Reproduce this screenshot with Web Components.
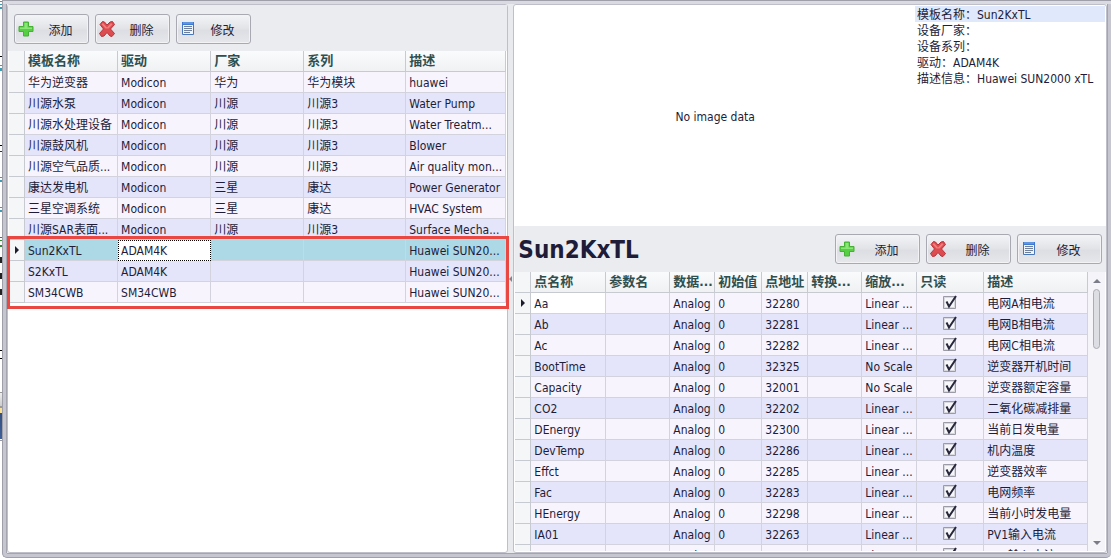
<!DOCTYPE html>
<html lang="zh-CN">
<head>
<meta charset="utf-8">
<title>设备模板</title>
<style>
  html, body { margin: 0; height: 100%; }
  body {
    font: 12px/20px "DejaVu Sans Condensed", "Noto Sans", "Noto Sans CJK SC", sans-serif;
    color: #1e1c38; background: #fff; overflow: hidden;
  }
</style>
</head>
<body>
<template-manager></template-manager>

<template id="t-manager">
  <style>
    :host { display: flex; height: 100vh; }
    .backdrop {
      flex: 0 0 2px;
      background: linear-gradient(#fff 0 1px, #3b9db5 1px 2px, #fff 2px 4px, #3b9db5 4px 5px, #fff 5px 7px, #3b9db5 7px 9px,
        #fff 9px 56px, #000 56px 57px, #fff 57px 65px, #3b9db5 65px 66px, #fff 66px 68px, #3b9db5 68px 71px,
        #fff 71px 145px, #000 145px 146px, #fff 146px 151px, #333 151px 152px, #fff 152px 177px, #3b9db5 177px 178px,
        #fff 178px 180px, #3b9db5 180px 182px, #fff 182px 207px, #3b9db5 207px 208px, #fff 208px 210px, #3b9db5 210px 212px,
        #fff 212px 237px, #2a8c2a 237px 238px, #fff 238px 240px, #2a8c2a 240px 241px, #fff 241px 245px, #2a8c2a 245px 247px,
        #fff 247px 257px, #222 257px 263px, #fff 263px 273px, #222 273px 279px, #fff 279px 289px, #222 289px 295px,
        #fff 295px 350px, #000 350px 351px, #fff 351px 358px, #000 358px 359px, #fff 359px 392px, #999 392px 393px,
        #eee 393px, #ccc 406px, #999 406px 408px, #f8e09a 408px 413px, #34507f 413px, #3f5f9a 439px, #fff 439px 440px, #999 440px 441px, #fff 441px);
    }
    .frame {
      flex: 1; min-width: 0; display: flex; box-sizing: border-box;
      border: solid #9f9faa; border-width: 1px 0 1px 1px; border-radius: 0 0 5px 5px;
      padding: 3px 4px 4px 3px;
      background: linear-gradient(#dadae2, #dadae2) top / 100% 3px no-repeat, #c6c6d0;
    }
    .inner { flex: 1; min-width: 0; display: flex; background: #e9eaed; box-shadow: -1px 0 #a5a5b0, 0 1px #a5a5b0, 1px 0 #a5a5b0; margin-left: 1px; }
    side-panel.left { flex: 501 1 0; }
    side-panel.right { flex: 594 1 0; }
    .splitter { flex: 0 0 5px; display: flex; align-items: center; justify-content: center; }
    tool-bar { --pad: 8px 5px 7px; }
    .right tool-bar { --pad: 7px 3px 8px; --button-width: 85px; }
    h1 { font: bold 24px/32px "DejaVu Sans Condensed", "Noto Sans", sans-serif; margin: 0; flex: 1; height: 30px; }
    .marked { position: relative; }
    .marked i {
      position: absolute; left: -2px; right: -3px; bottom: -6px; height: 73px;
      box-sizing: border-box; border: 3px solid #e84742; pointer-events: none;
    }
    device-summary { flex: 221 1 0; }
    .points { flex: 279 1 0; min-height: 0; display: flex; overflow: hidden; }
    .points data-grid { flex: 1; min-width: 0; }
  </style>
  <div class="backdrop"></div>
  <div class="frame">
    <div class="inner">
      <side-panel class="left">
        <tool-bar>
          <tool-button icon="add">添加</tool-button>
          <tool-button icon="remove">删除</tool-button>
          <tool-button icon="edit">修改</tool-button>
        </tool-bar>
        <div class="marked"><data-grid source="templates"></data-grid><i></i></div>
      </side-panel>
      <div class="splitter"><svg width="3" height="6" viewBox="0 0 3 6"><path d="M3 0v6L0 3z" fill="#85858f"/></svg></div>
      <side-panel class="right">
        <device-summary></device-summary>
        <tool-bar>
          <h1 slot="title">Sun2KxTL</h1>
          <tool-button icon="add">添加</tool-button>
          <tool-button icon="remove">删除</tool-button>
          <tool-button icon="edit">修改</tool-button>
        </tool-bar>
        <div class="points"><data-grid source="points"></data-grid><scroll-track></scroll-track></div>
      </side-panel>
    </div>
  </div>
</template>

<template id="t-panel">
  <style>
    :host {
      display: flex; flex-direction: column; min-width: 0; box-sizing: border-box;
      border: 1px solid #bfbfc9; border-radius: 3px; padding: 1px; background: #fff;
    }
  </style>
  <slot></slot>
</template>

<template id="t-toolbar">
  <style>
    :host { display: flex; gap: 6px; padding: var(--pad); background: #ebecef; box-shadow: 0 0 0 1px #ebecef; clip-path: inset(-1px -1px 0 -1px); }
  </style>
  <slot name="title"></slot><slot></slot>
</template>

<template id="t-button">
  <style>
    :host { display: block; width: var(--button-width, 75px); }
    button {
      display: flex; align-items: center; width: 100%; height: 30px; margin: 0; padding: 0 1px 0 3px;
      font: inherit; color: inherit; border: 1px solid #a9a9b2; border-radius: 3px;
      background: linear-gradient(#f3f4f6, #e2e3e7 50%, #dcdee3 55%, #e6e7eb);
      box-shadow: inset 0 0 0 1px #f3f3f6;
    }
    svg { flex: none; }
    span { flex: 1; text-align: center; padding-top: 3px; line-height: 20px; }
  </style>
  <button type="button"><svg width="16" height="16" viewBox="0 0 16 16" aria-hidden="true"></svg><span><slot></slot></span></button>
</template>

<template id="t-summary">
  <style>
    :host { display: flex; min-height: 0; line-height: 16px; }
    .picture { flex: 1; display: flex; align-items: center; justify-content: center; }
    dl { flex: 0 0 190px; margin: 0; white-space: nowrap; }
    div.line { display: flex; height: 16px; padding-left: 2px; line-height: 18px; }
    div.line:first-child { background: #e0e9fc; }
    dd { margin: 0; }
  </style>
  <div class="picture">No image data</div>
  <dl>
    <div class="line"><dt>模板名称：</dt><dd>Sun2KxTL</dd></div>
    <div class="line"><dt>设备厂家：</dt><dd></dd></div>
    <div class="line"><dt>设备系列：</dt><dd></dd></div>
    <div class="line"><dt>驱动：</dt><dd>ADAM4K</dd></div>
    <div class="line"><dt>描述信息：</dt><dd>Huawei SUN2000 xTL</dd></div>
  </dl>
</template>

<template id="t-grid">
  <style>
    :host { display: block; }
    table { width: 100%; table-layout: fixed; border-collapse: separate; border-spacing: 0; }
    th, td {
      box-sizing: border-box; height: 21px; line-height: 18px; padding: 2px 0 0 3px; text-align: left; font-weight: normal;
      white-space: nowrap; overflow: hidden; border: solid #d3d3de; border-width: 0 1px 1px 0;
    }
    thead th {
      font-size: 13px; line-height: 20px; padding-top: 0; font-weight: bold; color: #2f4f4f; border-color: #c7cad0;
      background: linear-gradient(#fafbfc, #eff1f3);
    }
    .mark { padding: 0; background: #f5f6f8; border-color: #c7cad0; text-align: center; }
    .mark svg { display: block; margin: 0 auto; }
    tbody tr { background: #f7f4fe; }
    tbody tr:nth-child(even) { background: #e4e5fa; }
    tbody tr.selected { background: #add8e6; }
    td.focus { background: #fff; }
    .selected td.focus { outline: 1px dotted #000; outline-offset: -1px; border-color: transparent; }
    td.check { padding: 0; text-align: center; }
    input {
      display: block; appearance: none; width: 14px; height: 14px; margin: 0 auto 3px;
      background: url("data:image/svg+xml,%3Csvg xmlns='http://www.w3.org/2000/svg' width='14' height='14'%3E%3Cpath d='M.5 1.5h12v12H.5z' fill='%23d9dae0' stroke='%239a9ba5'/%3E%3Cpath d='M2 3h9v9H2z' fill='%23f7f7fa'/%3E%3Cpath d='M3.5 6.5L6 11.5L13 1' fill='none' stroke='%2328283c' stroke-width='2'/%3E%3C/svg%3E");
    }
  </style>
  <table><colgroup></colgroup><thead></thead><tbody></tbody></table>
</template>

<template id="t-scroll">
  <style>
    :host { display: flex; flex: 0 0 17px; flex-direction: column; align-items: center; background: #f5f5f9; padding: 7px 0 6px; box-sizing: border-box; }
    .thumb { width: 5px; height: 58px; margin-top: 6px; border: 1px solid #acacb6; border-radius: 4px; background: #dddde4; }
    .down { margin-top: auto; }
  </style>
  <svg width="8" height="4" viewBox="0 0 8 4"><path d="M0 4h8L4 0z" fill="#7c7c88"/></svg>
  <div class="thumb"></div>
  <svg class="down" width="8" height="4" viewBox="0 0 8 4"><path d="M0 0h8L4 4z" fill="#7c7c88"/></svg>
</template>

<script>
  const ICONS = {
    add: '<path d="M5.5 1h5v4.500h4.500v5h-4.500v4.500h-5v-4.500h-4.500v-5h4.500z" fill="#57cf43" stroke="#46b035"/><path d="M6.500 2h3v4.500h4.500v1.500h-12v-1.500h4.500z" fill="#8be678"/>',
    remove: '<path d="M1 3.500L3.500.5L5.500 1L8 4L11 1L13.500.5L15.500 3.500L11.500 8L15.500 12.500L13 15.500L11 15L8 11.500L5 15L2.500 15.500L.5 12.500L4.500 8z" fill="#dc4b50" stroke="#bd3038"/><path d="M2.500 3.200L4 2L8 6.500L12 2L13.500 3.500L9.500 7.500H6.500z" fill="#ef7d7b"/>',
    edit: '<path d="M2.500 1.500h11v12h-11z" fill="#eef4fb" stroke="#4876bb"/><path d="M2 1h12v3H2z" fill="#3e78d2"/><path d="M3 2h10" stroke="#83b4ef"/><path d="M4 5.500h8M4 7.500h8M4 9.500h8M4 11.500h6" stroke="#6d7f9b"/>'
  };

  const templates = {
    focus: [8, 1],
    columns: [['模板名称', 93], ['驱动', 93], ['厂家', 93], ['系列', 102], ['描述', 100]],
    rows: [
      ['华为逆变器', 'Modicon', '华为', '华为模块', 'huawei'],
      ['川源水泵', 'Modicon', '川源', '川源3', 'Water Pump'],
      ['川源水处理设备', 'Modicon', '川源', '川源3', 'Water Treatm...'],
      ['川源鼓风机', 'Modicon', '川源', '川源3', 'Blower'],
      ['川源空气品质...', 'Modicon', '川源', '川源3', 'Air quality mon...'],
      ['康达发电机', 'Modicon', '三星', '康达', 'Power Generator'],
      ['三星空调系统', 'Modicon', '三星', '康达', 'HVAC System'],
      ['川源SAR表面...', 'Modicon', '川源', '川源3', 'Surface Mecha...'],
      ['Sun2KxTL', 'ADAM4K', '', '', 'Huawei SUN20...'],
      ['S2KxTL', 'ADAM4K', '', '', 'Huawei SUN20...'],
      ['SM34CWB', 'SM34CWB', '', '', 'Huawei SUN20...']
    ],
    selected: 8
  };

  const point = (name, address, description, scale = 'Linear ...') =>
    [name, '', 'Analog', '0', address, '', scale, true, description];

  const points = {
    focus: [0, 0],
    columns: [['点名称', 75], ['参数名', 64], ['数据...', 45], ['初始值', 47], ['点地址', 46], ['转换...', 54], ['缩放...', 55], ['只读', 67], ['描述', 104]],
    rows: [
      point('Aa', '32280', '电网A相电流'),
      point('Ab', '32281', '电网B相电流'),
      point('Ac', '32282', '电网C相电流'),
      point('BootTime', '32325', '逆变器开机时间', 'No Scale'),
      point('Capacity', '32001', '逆变器额定容量', 'No Scale'),
      point('CO2', '32202', '二氧化碳减排量'),
      point('DEnergy', '32300', '当前日发电量'),
      point('DevTemp', '32286', '机内温度'),
      point('Effct', '32285', '逆变器效率'),
      point('Fac', '32283', '电网频率'),
      point('HEnergy', '32298', '当前小时发电量'),
      point('IA01', '32263', 'PV1输入电流'),
      point('IA02', '32265', 'PV2输入电流')
    ]
  };

  const SOURCES = { templates, points };

  class TemplateElement extends HTMLElement {
    constructor() {
      super();
      const source = document.getElementById(this.constructor.template);
      this.attachShadow({ mode: 'open' }).append(source.content.cloneNode(true));
    }
  }

  class SidePanel extends TemplateElement { static template = 't-panel'; }
  class ToolBar extends TemplateElement { static template = 't-toolbar'; }
  class DeviceSummary extends TemplateElement { static template = 't-summary'; }
  class ScrollTrack extends TemplateElement { static template = 't-scroll'; }
  class TemplateManager extends TemplateElement { static template = 't-manager'; }

  class ToolButton extends TemplateElement {
    static template = 't-button';
    connectedCallback() {
      this.shadowRoot.querySelector('svg').innerHTML = ICONS[this.getAttribute('icon')];
    }
  }

  class DataGrid extends TemplateElement {
    static template = 't-grid';
    connectedCallback() {
      const { columns, rows, focus, selected } = SOURCES[this.getAttribute('source')];
      const root = this.shadowRoot;
      root.querySelector('colgroup').innerHTML =
        '<col style="width:16px">' + columns.map(([, width]) => `<col style="width:${width}px">`).join('');
      root.querySelector('thead').innerHTML =
        '<tr><th class="mark"></th>' + columns.map(([title]) => `<th scope="col">${title}</th>`).join('') + '</tr>';
      root.querySelector('tbody').innerHTML = rows.map((row, r) => {
        const arrow = r === focus[0] ? '<svg width="4" height="8" viewBox="0 0 4 8"><path d="M0 0v8L4 4z" fill="#1c1c2c"/></svg>' : '';
        const cells = row.map((value, c) => value === true
          ? `<td class="check"><input type="checkbox" checked aria-label="${columns[c][0]} ${row[0]}"></td>`
          : `<td${r === focus[0] && c === focus[1] ? ' class="focus"' : ''}>${value}</td>`).join('');
        return `<tr${r === selected ? ' class="selected"' : ''}><td class="mark">${arrow}</td>${cells}</tr>`;
      }).join('');
    }
  }

  customElements.define('side-panel', SidePanel);
  customElements.define('tool-bar', ToolBar);
  customElements.define('tool-button', ToolButton);
  customElements.define('device-summary', DeviceSummary);
  customElements.define('data-grid', DataGrid);
  customElements.define('scroll-track', ScrollTrack);
  customElements.define('template-manager', TemplateManager);
</script>
</body>
</html>
